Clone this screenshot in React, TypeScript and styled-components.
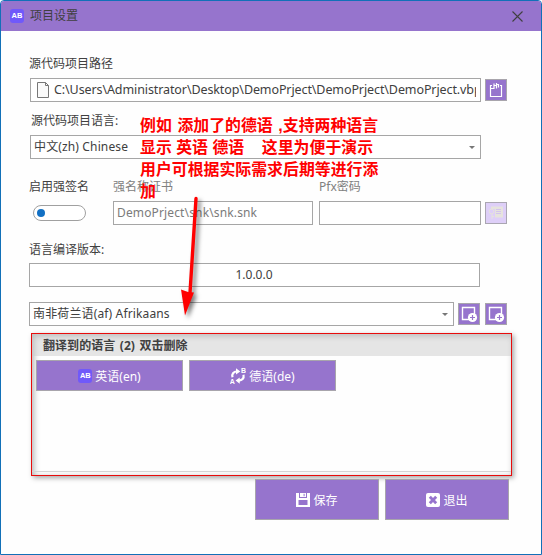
import React from 'react';
import styled, { createGlobalStyle, css } from 'styled-components';

const GlobalStyle = createGlobalStyle`
  * { box-sizing: border-box; }
  body { margin: 0; background: #fff; }
  svg { display: block; flex: none; }
`;

const Window = styled.div`
  position: relative;
  width: 542px;
  height: 555px;
  border: 1px solid #1270b8;
  border-radius: 4px 4px 0 0;
  background: #fefefe;
  color: #404040;
  font: 12px/18px "Noto Sans", "Noto Sans CJK SC", sans-serif;
  overflow: hidden;
`;

const TitleBar = styled.header`
  display: flex;
  align-items: center;
  height: 30px;
  padding: 0 18px 0 9px;
  background: #9674cd;
`;

const Title = styled.h1`
  flex: 1;
  margin: 0 0 0 6px;
  font-size: 12px;
  font-weight: 400;
`;

const Form = styled.main`
  display: flex;
  flex-direction: column;
  padding: 23px 28px 0;
`;

const Row = styled.div<{ $top?: number; $gap?: number; $left?: number }>`
  display: flex;
  align-items: center;
  gap: ${p => p.$gap ?? 4}px;
  margin-top: ${p => p.$top ?? 0}px;
  margin-left: ${p => p.$left ?? 0}px;
`;

const Label = styled.label<{ $width?: number; $muted?: boolean; $indent?: number }>`
  width: ${p => (p.$width ? `${p.$width}px` : 'auto')};
  height: 18px;
  padding-left: ${p => p.$indent ?? 0}px;
  line-height: 20px;
  white-space: nowrap;
  color: ${p => (p.$muted ? '#808080' : '#404040')};
`;

const Field = styled.div<{ $width: number; $muted?: boolean; $center?: boolean }>`
  display: flex;
  align-items: center;
  justify-content: ${p => (p.$center ? 'center' : 'flex-start')};
  width: ${p => p.$width}px;
  height: 24px;
  padding: 0 4px 0 3px;
  border: 1px solid #a6a6a6;
  background: #fff;
  color: ${p => (p.$muted ? '#7b7b7b' : '#404040')};
  white-space: nowrap;
`;

const FieldText = styled.span`
  flex: 0 1 auto;
  min-width: 0;
  overflow: hidden;
  letter-spacing: 0.14px;
`;

const PathText = styled(FieldText)`
  margin-left: 5px;
  font-size: 12.5px;
  letter-spacing: -0.1px;
`;

const Caret = styled.span`
  width: 0;
  height: 0;
  margin: 0 1px 0 auto;
  border: 3px solid transparent;
  border-top-color: #777;
  border-bottom: 0;
`;

const purple = css`
  border: 1px solid #a8a5ac;
  background: #9674cd;
  color: #fff;
  font: inherit;
  padding: 0;
`;

const IconButton = styled.button<{ $disabled?: boolean }>`
  ${purple}
  display: grid;
  place-items: center;
  width: 22px;
  height: 22px;
  ${p => p.$disabled && 'background: #decff8; border-color: #aaa6b2;'}
`;

const ActionButton = styled.button<{ $width: number; $height: number }>`
  ${purple}
  display: flex;
  align-items: center;
  justify-content: center;
  gap: 3px;
  width: ${p => p.$width}px;
  height: ${p => p.$height}px;
`;

const Caption = styled.span`
  line-height: 18px;
  padding-top: 2px;
`;

const Toggle = styled.div`
  display: flex;
  align-items: center;
  width: 53px;
  height: 16px;
  margin: 0 27px 0 4px;
  padding-left: 3px;
  border: 1px solid #a0a0a0;
  border-radius: 8px;
  background: #fff;
`;

const Knob = styled.span`
  width: 8px;
  height: 8px;
  border-radius: 50%;
  background: #1270c4;
`;

const LanguagePanel = styled.section`
  width: 481px;
  height: 143px;
  margin: 7px 0 0 2px;
  border: 1px solid #e80c0c;
  box-shadow: 2px 2px 5px rgba(0, 0, 0, 0.35), inset 2px 2px 6px rgba(0, 0, 0, 0.3);
  display: flex;
  flex-direction: column;
`;

const PanelHeader = styled.h2`
  margin: 0;
  height: 22px;
  padding-left: 11px;
  background: rgba(200, 200, 200, 0.45);
  font-size: 12px;
  line-height: 23px;
  font-weight: 700;
  letter-spacing: 0.05px;
  word-spacing: 1.3px;
`;

const LanguageList = styled.div`
  display: flex;
  gap: 6px;
  height: 116px;
  padding: 4px;
  border-bottom: 1px solid #d5d5d5;
`;

const Note = styled.p`
  position: absolute;
  left: 139px;
  top: 114px;
  width: 246px;
  margin: 0;
  color: #f00;
  font: 700 15.9px/22px "Liberation Sans", "Noto Sans CJK SC", sans-serif;
  white-space: pre;
`;

const NoteLine = styled.span<{ $wordSpacing?: number }>`
  display: block;
  word-spacing: ${p => p.$wordSpacing ?? 0}px;
`;

const Arrow = styled.svg`
  position: absolute;
  left: 169px;
  top: 189px;
  filter: drop-shadow(3px 3px 2px rgba(0, 0, 0, 0.5));
`;

const Badge = styled.span`
  display: grid;
  place-items: center;
  width: 14px;
  height: 14px;
  border-radius: 3px;
  background: #7059fa;
  color: #fff;
  font: 700 7.5px/14px "Liberation Sans", sans-serif;
`;

const DocumentIcon = () => (
  <svg width="15" height="18" viewBox="0 0 15 18" fill="#fafafa" stroke="#777">
    <path d="M3.500 1.500h8l3 3v12h-11zM11.500 1.500v3h3" />
  </svg>
);

const ClipboardIcon = () => (
  <svg width="18" height="18" viewBox="0 0 18 18" fill="none" stroke="#fff" strokeWidth="1.2">
    <path d="M5 4.500H3.500v11h11v-11H13M3.500 7.500h3.500v-5M7 4.500h2M9.500 2v5.500M9.500 3.500h2v3" />
  </svg>
);

const AddWindowIcon = () => (
  <svg width="18" height="18" viewBox="0 0 18 18">
    <path d="M2.500 2.500h12v12h-12z" fill="none" stroke="#fff" strokeWidth="1.4" />
    <circle cx="12.500" cy="12.500" r="4.600" fill="#fff" />
    <path d="M10 12.500h5M12.500 10v5" stroke="#9674cd" strokeWidth="1.2" />
  </svg>
);

const CertificateIcon = () => (
  <svg width="18" height="18" viewBox="0 0 18 18">
    <path d="M4 2.500h12v11H8V5H4z" fill="#e6e3dd" />
    <path d="M9 5.500h5M9 7.500h5M9 9.500h5" stroke="#d3c4ee" />
    <circle cx="4.500" cy="7.500" r="2.300" fill="none" stroke="#e6e3dd" />
    <path d="M5 10v5M5 12.500h2" stroke="#e6e3dd" />
  </svg>
);

const SwapIcon = () => (
  <svg width="16" height="16" viewBox="0 0 16 16" fill="none" stroke="#fff">
    <path d="M2.500 9.300C1.500 6 3.500 3.600 7 3.500M13.500 6.700c.8 4-1.500 5.800-4.700 5.900" strokeWidth="2.200" />
    <path d="M6 .3 10.300 3.500 6 6.500zM9.700 9.400 5.600 12.500l4.100 3.200z" fill="#fff" stroke="none" />
    <text x="-.2" y="15.800" fill="#fff" stroke="none" fontFamily="Liberation Sans, sans-serif" fontWeight="700" fontSize="7">A</text>
    <text x="11" y="5.200" fill="#fff" stroke="none" fontFamily="Liberation Sans, sans-serif" fontWeight="700" fontSize="7">B</text>
  </svg>
);

const SaveIcon = () => (
  <svg width="14" height="14" viewBox="0 0 14 14">
    <path fill="#fff" fillRule="evenodd" d="M0 0h3v5h8V0h3v14H0zM2.500 7v5h9V7zM4 0h6v4H4zM7.600.7v2.600h1V.7z" />
  </svg>
);

const ExitIcon = () => (
  <svg width="14" height="14" viewBox="0 0 14 14">
    <rect width="14" height="14" rx="2" fill="#fff" />
    <path d="m3.800 3.800 6.400 6.400m0-6.400-6.400 6.400" stroke="#9674cd" strokeWidth="2.900" />
  </svg>
);

const CloseIcon = () => (
  <svg width="11" height="11" viewBox="0 0 11 11" stroke="#404040" strokeWidth="1.100">
    <path d="m.5.5 10 10m0-10-10 10" />
  </svg>
);

export default function App() {
  return (
    <>
      <GlobalStyle />
      <Window>
        <TitleBar>
          <Badge>AB</Badge>
          <Title>项目设置</Title>
          <CloseIcon />
        </TitleBar>
        <Form>
          <Label>源代码项目路径</Label>
          <Row $top={6} $left={1}>
            <Field $width={451}>
              <DocumentIcon />
              <PathText>C:\Users\Administrator\Desktop\DemoPrject\DemoPrject\DemoPrject.vbp</PathText>
            </Field>
            <IconButton><ClipboardIcon /></IconButton>
          </Row>
          <Row $top={9}><Label $indent={2}>源代码项目语言:</Label></Row>
          <Row $top={6} $left={1}>
            <Field $width={451}><FieldText>中文(zh) Chinese</FieldText><Caret /></Field>
          </Row>
          <Row $top={18} $gap={0}>
            <Label $width={84}>启用强签名</Label>
            <Label $width={206} $muted>强名称证书</Label>
            <Label $muted>Pfx密码</Label>
          </Row>
          <Row $top={6} $gap={0}>
            <Toggle><Knob /></Toggle>
            <Row $gap={6}>
              <Field $width={200} $muted><FieldText>DemoPrject\snk\snk.snk</FieldText></Field>
              <Field $width={162} />
              <Row $left={-2}><IconButton $disabled><CertificateIcon /></IconButton></Row>
            </Row>
          </Row>
          <Row $top={15}><Label>语言编译版本:</Label></Row>
          <Row $top={5}><Field $width={451} $center>1.0.0.0</Field></Row>
          <Row $top={15}>
            <Field $width={425}><FieldText>南非荷兰语(af) Afrikaans</FieldText><Caret /></Field>
            <IconButton><AddWindowIcon /></IconButton>
            <Row $left={1}><IconButton><AddWindowIcon /></IconButton></Row>
          </Row>
          <LanguagePanel>
            <PanelHeader>翻译到的语言 (2) 双击删除</PanelHeader>
            <LanguageList>
              <ActionButton $width={147} $height={31}><Badge>AB</Badge><Caption>英语(en)</Caption></ActionButton>
              <ActionButton $width={147} $height={31}><SwapIcon /><Caption>德语(de)</Caption></ActionButton>
            </LanguageList>
          </LanguagePanel>
          <Row $top={3} $left={226} $gap={6}>
            <ActionButton $width={124} $height={41}><SaveIcon /><Caption>保存</Caption></ActionButton>
            <ActionButton $width={124} $height={41}><ExitIcon /><Caption>退出</Caption></ActionButton>
          </Row>
        </Form>
        <Note>
          <NoteLine $wordSpacing={1.2}>例如 添加了的德语 ,支持两种语言</NoteLine>
          <NoteLine>{'显示 英语 德语    这里为便于演示'}</NoteLine>
          <NoteLine>用户可根据实际需求后期等进行添</NoteLine>
          <NoteLine>加</NoteLine>
        </Note>
        <Arrow width="36" height="140" viewBox="0 0 36 140">
          <path d="M26 8.500 20 103" stroke="#f00" strokeWidth="3.400" strokeLinecap="round" />
          <path d="m11 99.500 7 2.500 6 .5-9 23z" fill="#f00" />
        </Arrow>
      </Window>
    </>
  );
}
